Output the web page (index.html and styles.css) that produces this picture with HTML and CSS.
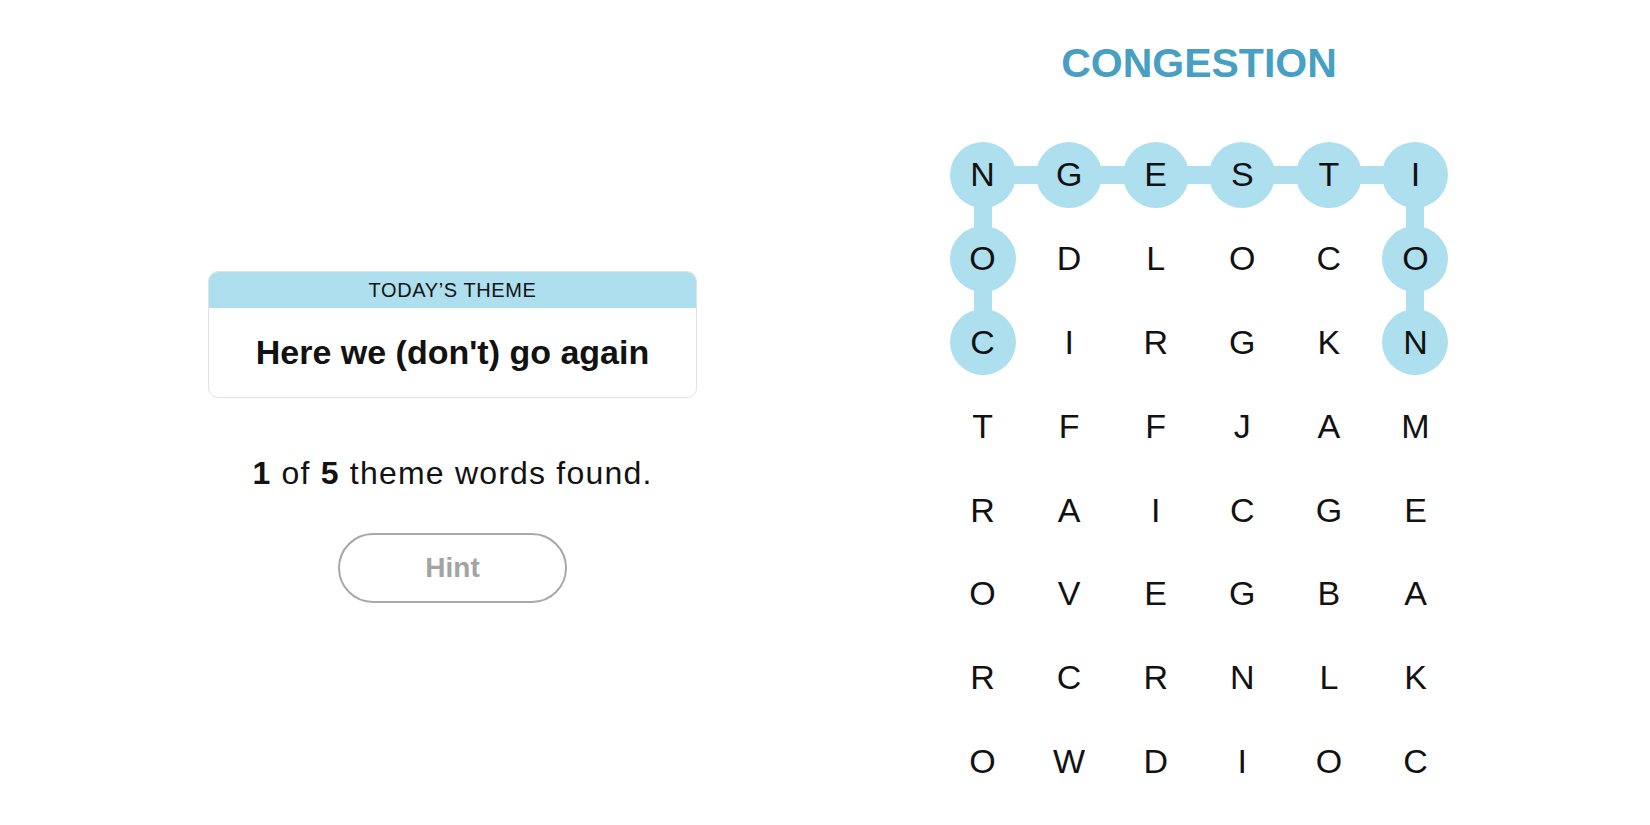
FILE: index.html
```html
<!DOCTYPE html>
<html lang="en">
<head>
<meta charset="utf-8">
<title>Strands</title>
<link rel="stylesheet" href="styles.css">
</head>
<body>
<main class="page">
  <section class="side">
    <div class="theme-card">
      <div class="theme-head">TODAY’S THEME</div>
      <div class="theme-body">Here we (don't) go again</div>
    </div>
    <p class="progress"><b>1</b> of <b>5</b> theme words found.</p>
    <button class="hint">Hint</button>
  </section>
  <section class="game">
    <h1 class="word">CONGESTION</h1>
    <div class="board">
      <div class="cell sel link-d">N</div><div class="cell sel link-l">G</div><div class="cell sel link-l">E</div><div class="cell sel link-l">S</div><div class="cell sel link-l">T</div><div class="cell sel link-l link-d">I</div>
      <div class="cell sel link-d">O</div><div class="cell">D</div><div class="cell">L</div><div class="cell">O</div><div class="cell">C</div><div class="cell sel link-d">O</div>
      <div class="cell sel">C</div><div class="cell">I</div><div class="cell">R</div><div class="cell">G</div><div class="cell">K</div><div class="cell sel">N</div>
      <div class="cell">T</div><div class="cell">F</div><div class="cell">F</div><div class="cell">J</div><div class="cell">A</div><div class="cell">M</div>
      <div class="cell">R</div><div class="cell">A</div><div class="cell">I</div><div class="cell">C</div><div class="cell">G</div><div class="cell">E</div>
      <div class="cell">O</div><div class="cell">V</div><div class="cell">E</div><div class="cell">G</div><div class="cell">B</div><div class="cell">A</div>
      <div class="cell">R</div><div class="cell">C</div><div class="cell">R</div><div class="cell">N</div><div class="cell">L</div><div class="cell">K</div>
      <div class="cell">O</div><div class="cell">W</div><div class="cell">D</div><div class="cell">I</div><div class="cell">O</div><div class="cell">C</div>
    </div>
  </section>
</main>
</body>
</html>
```
FILE: styles.css
```css
* { box-sizing: border-box; }
html, body {
  margin: 0;
  padding: 0;
  background: #ffffff;
  color: #121212;
  font-family: "Liberation Sans", Arial, sans-serif;
}
.page {
  display: flex;
  width: 1650px;
  height: 825px;
  overflow: hidden;
}
.side {
  width: 905px;
  display: flex;
  flex-direction: column;
  align-items: center;
  padding-top: 271px;
}
.theme-card {
  width: 489px;
  border: 1px solid #e2e2e2;
  border-radius: 10px;
  overflow: hidden;
  background: #fff;
}
.theme-head {
  background: #aedfee;
  height: 36px;
  display: flex;
  align-items: center;
  justify-content: center;
  font-size: 20px;
  letter-spacing: 0.6px;
  color: #121212;
}
.theme-body {
  height: 89px;
  display: flex;
  align-items: center;
  justify-content: center;
  font-weight: 700;
  font-size: 34px;
  color: #121212;
}
.progress {
  margin: 57px 0 0;
  font-size: 32px;
  line-height: 36px;
  letter-spacing: 1.2px;
  color: #121212;
}
.progress b { font-weight: 700; }
.hint {
  margin-top: 42px;
  width: 229px;
  height: 70px;
  border: 2px solid #a8a8a8;
  border-radius: 35px;
  background: #fff;
  color: #a3a3a3;
  font-family: "Liberation Sans", Arial, sans-serif;
  font-weight: 700;
  font-size: 28px;
  padding: 0;
}
.game {
  width: 588px;
  display: flex;
  flex-direction: column;
  align-items: center;
}
.word {
  margin: 39px 0 0;
  font-size: 41px;
  line-height: 48px;
  font-weight: 700;
  color: #479fc3;
}
.board {
  position: relative;
  z-index: 0;
  margin-top: 46px;
  display: grid;
  grid-template-columns: repeat(6, 86.6px);
  grid-auto-rows: 83.8px;
}
.cell {
  position: relative;
  display: flex;
  align-items: center;
  justify-content: center;
  font-size: 34px;
  color: #121212;
}
.cell.sel::before {
  content: "";
  position: absolute;
  left: 50%;
  top: 50%;
  width: 66px;
  height: 66px;
  margin: -33px 0 0 -33px;
  border-radius: 50%;
  background: #aedfee;
  z-index: -1;
}
.cell.link-l::after,
.cell.link-d::after {
  content: "";
  position: absolute;
  z-index: -1;
}
.cell.link-l::after {
  top: calc(50% - 9px);
  height: 18px;
  right: 50%;
  width: 86.6px;
  background: #aedfee;
}
.cell.link-d::after {
  left: calc(50% - 9px);
  width: 18px;
  top: 50%;
  height: 83.8px;
  background: #aedfee;
}
.cell.link-l.link-d::after {
  top: calc(50% - 9px);
  left: auto;
  right: calc(50% - 9px);
  width: 95.6px;
  height: 92.8px;
  background:
    linear-gradient(#aedfee, #aedfee) left top / 100% 18px no-repeat,
    linear-gradient(#aedfee, #aedfee) right top / 18px 100% no-repeat;
}
```
